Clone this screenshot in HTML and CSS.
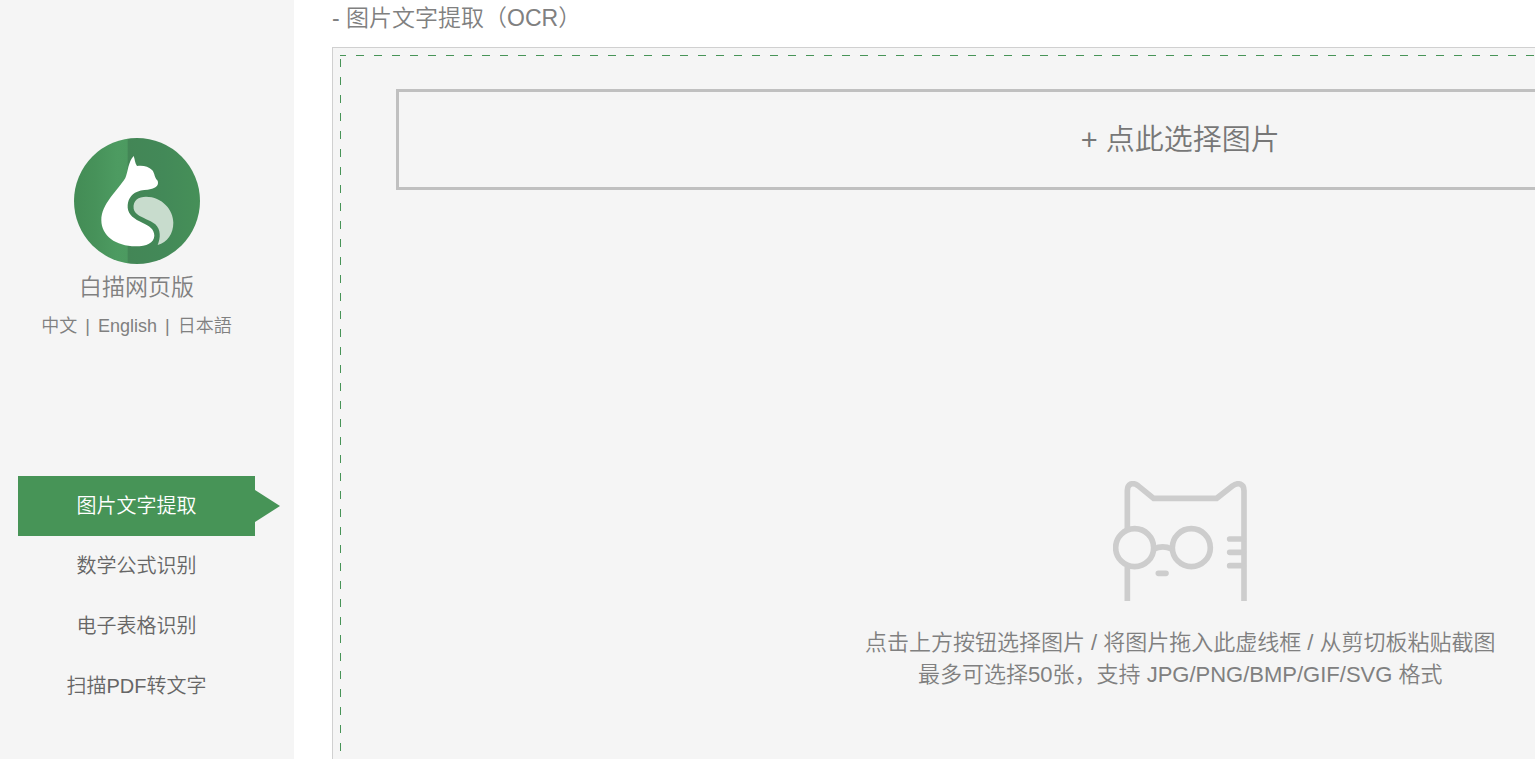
FILE: index.html
```
<!DOCTYPE html>
<html lang="zh-CN">
<head>
    <meta charset="utf-8">
    <title>白描网页版</title>
    <link rel="stylesheet" href="styles.css">
</head>
<body>
    <div class="page">
        <aside class="sidebar">
            <svg class="logo" viewBox="40 25 378 378" aria-hidden="true">
                <defs>
                    <linearGradient id="leftside">
                        <stop offset="0" stop-color="#438c55"/>
                        <stop offset="0.4" stop-color="#47925a"/>
                        <stop offset="0.8" stop-color="#4d9b61"/>
                        <stop offset="1" stop-color="#4c9a60"/>
                    </linearGradient>
                    <linearGradient id="rightside">
                        <stop offset="0" stop-color="#438656"/>
                        <stop offset="0.5" stop-color="#438958"/>
                        <stop offset="1" stop-color="#469058"/>
                    </linearGradient>
                    <clipPath id="round"><circle cx="229" cy="214" r="189"/></clipPath>
                </defs>
                <g clip-path="url(#round)">
                    <rect x="40" y="25" width="162" height="378" fill="url(#leftside)"/>
                    <rect x="201" y="25" width="217" height="378" fill="url(#rightside)"/>
                </g>
                <path fill="#fff" d="M219 79C223 88 222 100 229 109C248 107 263 110 275 122C283 132 281 145 291 153C295 166 287 174 271 178C258 182 244 180 230 186C210 193 200 212 201 234C203 256 222 268 245 279C266 289 281 298 281 318C280 340 258 350 225 350C165 350 122 318 122 272C122 222 170 184 194 145C202 126 203 95 219 79Z"/>
                <path fill="#c8dccd" d="M219 237C216 211 234 201 256 201C304 201 338 240 338 279C338 312 320 338 291 346C300 325 301 300 284 284C262 265 224 262 219 237Z"/>
            </svg>
            <h1 class="name">白描网页版</h1>
            <div class="langs">
                <a href="#">中文</a><span>|</span><a href="#">English</a><span>|</span><a href="#">日本語</a>
            </div>
            <nav class="menu">
                <a class="active" href="#">图片文字提取</a>
                <a href="#">数学公式识别</a>
                <a href="#">电子表格识别</a>
                <a href="#">扫描PDF转文字</a>
            </nav>
        </aside>
        <main class="main">
            <h2 class="title">- 图片文字提取（OCR）</h2>
            <section class="panel">
                <div class="dropzone">
                    <button class="choose" type="button">+ 点此选择图片</button>
                    <svg class="cat" viewBox="39 33 402 360" aria-hidden="true">
                        <path d="M82 176V62C82 42 97 35 114 47L161 85H350L397 48C415 35 432 42 432 62V393M82 290V393"/>
                        <circle cx="104" cy="233" r="57"/>
                        <circle cx="274" cy="233" r="57"/>
                        <path d="M162 237Q188 224 215 237"/>
                        <path class="round" d="M175 310H198M389 207H430M389 247H430M389 287H430"/>
                    </svg>
                    <p class="hint">点击上方按钮选择图片 / 将图片拖入此虚线框 / 从剪切板粘贴截图<br>最多可选择50张，支持 JPG/PNG/BMP/GIF/SVG 格式</p>
                </div>
            </section>
        </main>
    </div>
</body>
</html>
```

FILE: styles.css
```
body{
    margin:0;
    overflow:hidden;
    background-color:#fff;
    color:#808080;
    font-family:"Liberation Sans","Noto Sans CJK SC",sans-serif;
    font-weight:350;
}
a{
    color:inherit;
    text-decoration:none;
}
.page{
    display:flex;
    min-height:100vh;
}
.sidebar{
    display:flex;
    flex-direction:column;
    align-items:center;
    flex:none;
    box-sizing:border-box;
    width:294px;
    padding:138px 39px 0 18px;
    background-color:#f5f5f5;
}
.logo{
    width:126px;
    height:126px;
}
.name{
    margin:5px 0 0;
    font-size:23px;
    font-weight:350;
    line-height:36px;
}
.langs{
    display:flex;
    gap:8px;
    margin-top:7px;
    font-size:18px;
    line-height:28px;
}
.menu{
    align-self:stretch;
    margin-top:136px;
}
.menu a{
    display:block;
    position:relative;
    color:#666;
    font-size:20px;
    line-height:60px;
    text-align:center;
}
.menu .active{
    background-color:#479457;
    color:#fff;
}
/* arrow on the selected item */
.menu .active::after{
    content:"";
    position:absolute;
    left:100%;
    top:14px;
    border:16px solid transparent;
    border-left:25px solid #479457;
    border-right:0;
}
/* the work area is wider than the window */
.main{
    display:flex;
    flex-direction:column;
    flex:0 0 113%;
    box-sizing:border-box;
    padding-left:38px;
}
.title{
    margin:0 0 11px;
    font-size:23px;
    font-weight:350;
    line-height:36px;
}
.panel{
    display:flex;
    flex:1;
    padding:7px 7px 0;
    border:1px solid #d0d0d0;
    border-bottom:0;
    background-color:#f5f5f5;
}
.dropzone{
    display:flex;
    flex-direction:column;
    align-items:center;
    flex:1;
    padding:34px 56px 68px;
    background-image:
        repeating-linear-gradient(to right,#479457 0 6px,transparent 6px 16px,#479457 16px 18px),
        repeating-linear-gradient(to bottom,transparent 0 4px,#479457 4px 12px,transparent 12px 18px);
    background-size:100% 1px,1px 100%;
    background-repeat:no-repeat;
}
.choose{
    align-self:stretch;
    height:101px;
    padding:0 0 6px;
    border:3px solid #c0c0c0;
    background-color:transparent;
    color:#777;
    font-family:inherit;
    font-size:29px;
    font-weight:350;
    cursor:pointer;
}
.cat{
    width:134px;
    height:120px;
    margin-top:291px;
    fill:none;
    stroke:#cdcdcd;
    stroke-width:17px;
}
.cat .round{
    stroke-linecap:round;
}
.hint{
    margin:26px 0 0;
    font-size:22px;
    line-height:32px;
    text-align:center;
}
```
